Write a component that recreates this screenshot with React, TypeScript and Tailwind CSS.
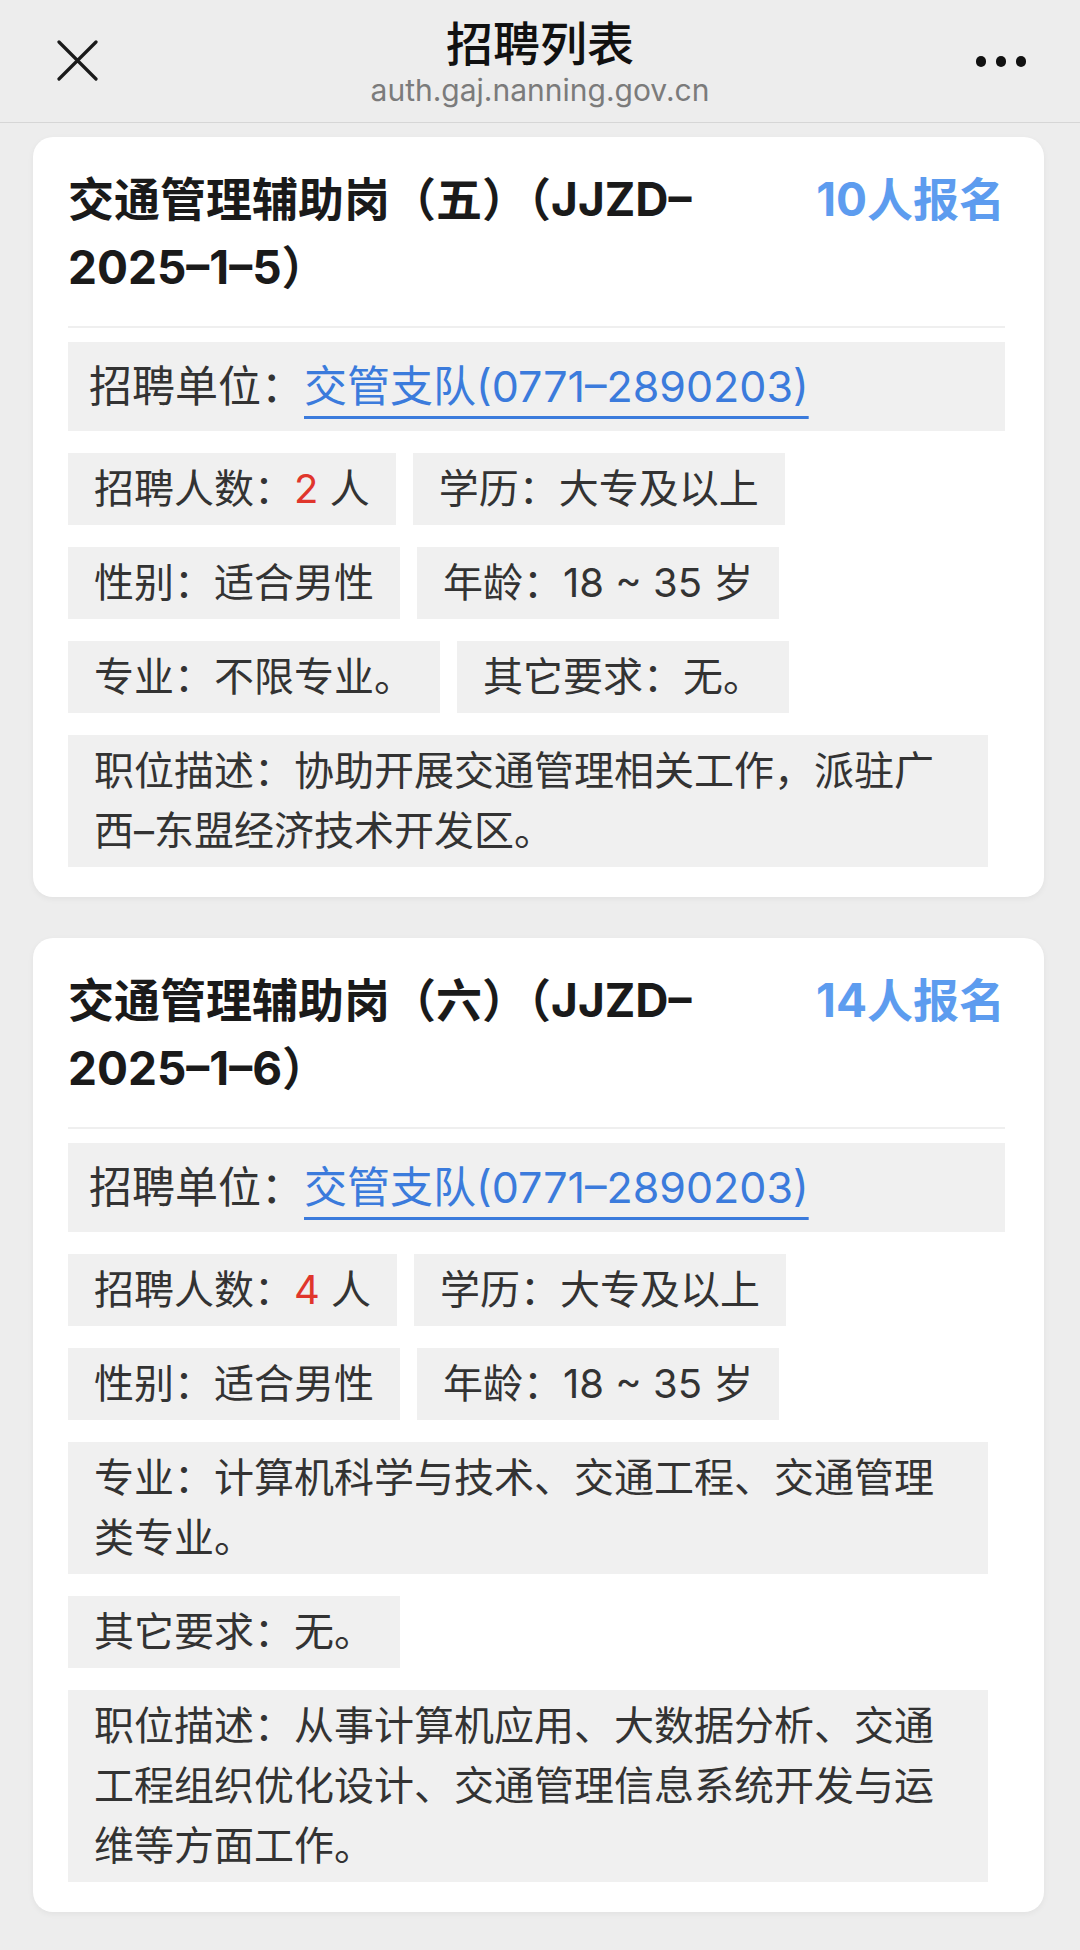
import React from "react";

type Item = { label: string; value: React.ReactNode };

function Box({ children }: { children: React.ReactNode }) {
  return (
    <div className="max-w-[920px] bg-[#f0f0f0] px-[26px] py-[6px] text-[40px] leading-[60px] text-[#333333]">
      {children}
    </div>
  );
}

function Card({
  title,
  code,
  count,
  items,
}: {
  title: string;
  code: string;
  count: string;
  items: Item[];
}) {
  return (
    <div className="ml-[33px] mr-[36px] rounded-[20px] bg-white pt-[28px] pb-[30px] pl-[35px] pr-[39px] shadow-[0_2px_6px_rgba(0,0,0,0.05)]">
      <div className="flex items-start">
        <div className="min-w-0 flex-1 text-[46px] font-bold leading-[68px] text-[#1a1a1a]">
          {title}（JJZD–<wbr />
          {code}）
        </div>
        <div className="ml-[40px] shrink-0 text-[46px] font-bold leading-[68px] text-[#5d9cef]">
          {count}人报名
        </div>
      </div>
      <div className="mt-[25px] h-[2px] bg-[#efefef]" />
      <div className="mt-[14px] bg-[#f0f0f0] px-[21px] py-[12px] text-[43px] leading-[65px] text-[#333333]">
        招聘单位：
        <span className="text-[#3b7bdc] underline decoration-[3px] underline-offset-[14px]">
          交管支队(0771–2890203)
        </span>
      </div>
      <div className="mt-[22px] flex flex-wrap gap-x-[17px] gap-y-[22px]">
        {items.map((it, i) => (
          <Box key={i}>
            {it.label}：{it.value}
          </Box>
        ))}
      </div>
    </div>
  );
}

export default function App() {
  const card1: Item[] = [
    {
      label: "招聘人数",
      value: (
        <>
          <span className="text-[#e0362c]">2</span> 人
        </>
      ),
    },
    { label: "学历", value: "大专及以上" },
    { label: "性别", value: "适合男性" },
    { label: "年龄", value: "18 ~ 35 岁" },
    { label: "专业", value: "不限专业。" },
    { label: "其它要求", value: "无。" },
    { label: "职位描述", value: "协助开展交通管理相关工作，派驻广西–东盟经济技术开发区。" },
  ];
  const card2: Item[] = [
    {
      label: "招聘人数",
      value: (
        <>
          <span className="text-[#e0362c]">4</span> 人
        </>
      ),
    },
    { label: "学历", value: "大专及以上" },
    { label: "性别", value: "适合男性" },
    { label: "年龄", value: "18 ~ 35 岁" },
    { label: "专业", value: "计算机科学与技术、交通工程、交通管理类专业。" },
    { label: "其它要求", value: "无。" },
    {
      label: "职位描述",
      value: "从事计算机应用、大数据分析、交通工程组织优化设计、交通管理信息系统开发与运维等方面工作。",
    },
  ];

  return (
    <div className="min-h-[1950px] w-[1080px] bg-[#ededed] font-[Inter,'Noto_Sans_CJK_SC',sans-serif]">
      <header className="flex h-[123px] items-start border-b border-[#d6d6d6] bg-[#ededed]">
        <div className="w-[120px] shrink-0 pl-[57px] pt-[40px]">
          <svg width="41" height="41" viewBox="0 0 41 41" fill="none">
            <path d="M2 2 L39 39 M39 2 L2 39" stroke="#1a1a1a" strokeWidth="3.2" strokeLinecap="round" />
          </svg>
        </div>
        <div className="flex flex-1 flex-col items-center pt-[16px]">
          <div className="text-[47px] font-medium leading-[56px] text-[#111111]">招聘列表</div>
          <div className="text-[30px] leading-[36px] text-[#7b7b7b]">auth.gaj.nanning.gov.cn</div>
        </div>
        <div className="flex w-[120px] shrink-0 justify-end gap-[9.5px] pr-[54px] pt-[56px]">
          <span className="block h-[10.5px] w-[10.5px] rounded-full bg-[#111111]" />
          <span className="block h-[10.5px] w-[10.5px] rounded-full bg-[#111111]" />
          <span className="block h-[10.5px] w-[10.5px] rounded-full bg-[#111111]" />
        </div>
      </header>
      <div className="mt-[14px] flex flex-col gap-[41px]">
        <Card title="交通管理辅助岗（五）" code="2025–1–5" count="10" items={card1} />
        <Card title="交通管理辅助岗（六）" code="2025–1–6" count="14" items={card2} />
      </div>
    </div>
  );
}
